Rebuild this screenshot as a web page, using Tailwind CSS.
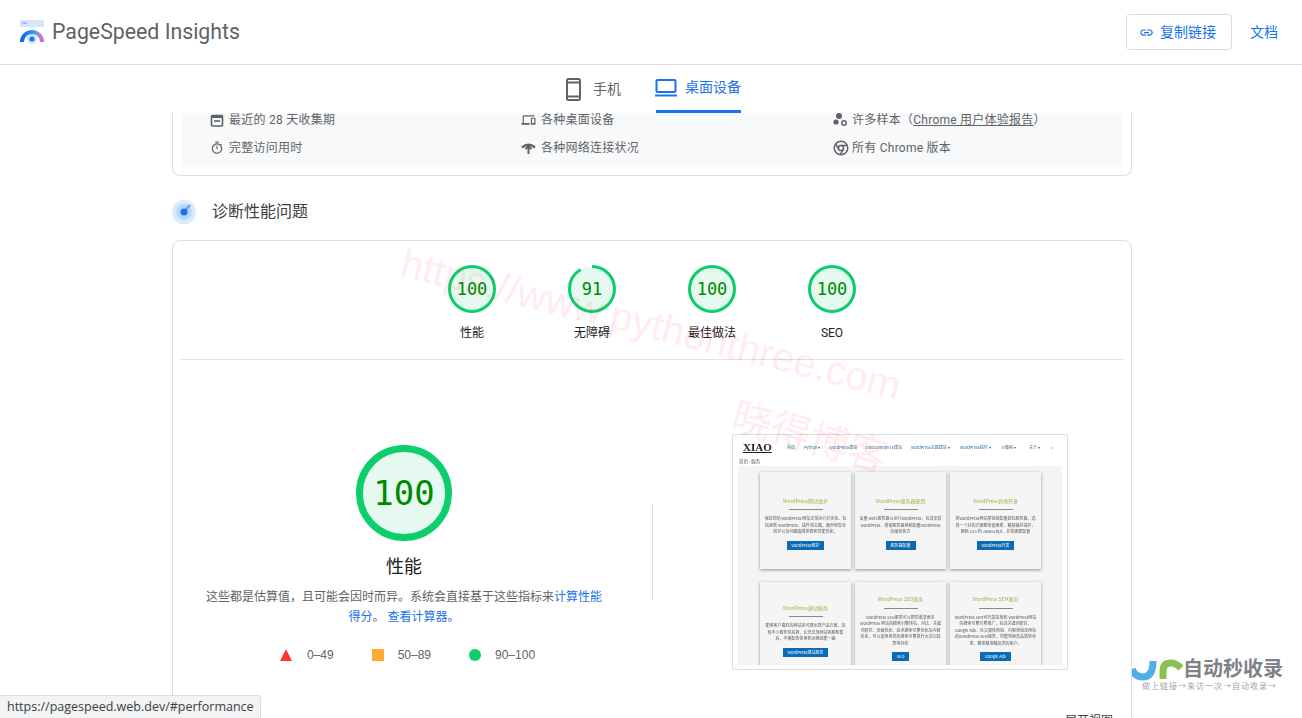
<!DOCTYPE html>
<html lang="zh-CN">
<head>
    <meta charset="UTF-8">
    <meta name="viewport" content="width=device-width, initial-scale=1.0">
    <title>PageSpeed Insights</title>
    <script src="https://cdn.jsdelivr.net/npm/@tailwindcss/browser@4"></script>
</head>
<body class="relative w-[1302px] h-[718px] overflow-hidden bg-white text-[#3c4043] font-['Roboto','Noto_Sans_CJK_SC',sans-serif]">
    <!-- 顶栏 -->
    <header class="h-[65px] border-b border-[#dadce0] flex items-center pl-[20px] pr-[24px]">
        <svg class="w-[25px] h-[25px]" viewBox="0 0 25 25">
            <defs>
                <linearGradient id="arc" x1="0" y1="0" x2="1" y2="0">
                    <stop offset="0" stop-color="#1a5ff0" />
                    <stop offset="0.55" stop-color="#2a9cf0" />
                    <stop offset="0.8" stop-color="#a08ae8" />
                    <stop offset="1" stop-color="#d06ad0" />
                </linearGradient>
            </defs>
            <rect x="0" y="0" width="24" height="7" fill="#d5e6fb" />
            <rect x="2" y="2" width="5" height="2" fill="#9cc4f7" />
            <path d="M2 22 A10 10 0 0 1 22 22" fill="none" stroke="url(#arc)" stroke-width="4" />
            <circle cx="12" cy="19" r="5" fill="#8ec5fb" opacity="0.45" />
            <circle cx="12" cy="19" r="2.5" fill="#1a73e8" />
        </svg>
        <span class="ml-[7px] -mt-[1px] text-[21.3px] text-[#5f6368]">PageSpeed Insights</span>
        <div class="ml-auto flex items-center">
            <button class="w-[106px] h-[36px] border border-[#dadce0] rounded-[4px] flex items-center justify-center gap-[6px] text-[14px] text-[#1a73e8]">
                <svg class="w-[15px] h-[15px] -ml-[3px]" viewBox="0 0 24 24" fill="#1a73e8">
                    <path d="M3.9 12c0-1.71 1.39-3.1 3.1-3.1h4V7H7c-2.76 0-5 2.24-5 5s2.24 5 5 5h4v-1.9H7c-1.71 0-3.1-1.39-3.1-3.1zM8 13h8v-2H8v2zm9-6h-4v1.9h4c1.71 0 3.1 1.39 3.1 3.1s-1.39 3.1-3.1 3.1h-4V17h4c2.76 0 5-2.24 5-5s-2.24-5-5-5z" />
                </svg>
                复制链接
            </button>
            <a class="ml-[18px] text-[14px] text-[#1a73e8]">文档</a>
        </div>
    </header>

    <!-- 设备切换 -->
    <nav class="h-[48px] flex pl-[565px] text-[14px]">
        <div class="w-[91px] flex items-center gap-[11px] text-[#5f6368]">
            <svg class="w-[17px] h-[23px]" viewBox="0 0 17 23" fill="none" stroke="#5f6368" stroke-width="2">
                <rect x="2" y="1" width="13" height="21" rx="1.5" />
                <path d="M2 4.5h13M2 18.5h13" />
            </svg>
            手机
        </div>
        <div class="w-[85px] h-[48px] border-b-[3px] border-[#1a73e8] flex items-center gap-[8px] text-[#1a73e8]">
            <svg class="w-[22px] h-[18px] -ml-[1px]" viewBox="0 0 22 18" fill="none" stroke="#1a73e8" stroke-width="2">
                <rect x="1.5" y="1" width="19" height="12" rx="1" />
                <path d="M0 16.5h22" />
            </svg>
            <span class="whitespace-nowrap">桌面设备</span>
        </div>
    </nav>

    <!-- 滚动区 -->
    <main class="h-[605px] overflow-hidden">
        <div class="w-[960px] ml-[172px]">
            <div class="-mt-[7px] border border-t-0 border-[#dadce0] rounded-b-[8px] px-[8px] pb-[8px]">
                <div class="bg-[#f8f9fa] pl-[29px] pb-[5px] grid grid-cols-[311px_312px_1fr] auto-rows-[28px] items-center text-[12px] tracking-[0.25px] text-[#5f6368]">
                    <div class="flex items-center gap-[5px]">
                        <svg class="w-[14px] h-[14px]" viewBox="0 0 14 14" fill="none" stroke="#5f6368" stroke-width="1.6">
                            <rect x="1.5" y="2.5" width="11" height="10.5" rx="1" />
                            <path d="M1.5 3.5h11" stroke-width="3" />
                            <path d="M4 8h6" />
                        </svg>
                        最近的 28 天收集期
                    </div>
                    <div class="flex items-center gap-[5px]">
                        <svg class="w-[15px] h-[14px]" viewBox="0 0 24 24" fill="#5f6368">
                            <path d="M4 6h18V4H4c-1.1 0-2 .9-2 2v11H0v3h14v-3H4V6zm19 2h-6c-.55 0-1 .45-1 1v10c0 .55.45 1 1 1h6c.55 0 1-.45 1-1V9c0-.55-.45-1-1-1zm-1 9h-4v-7h4v7z" />
                        </svg>
                        各种桌面设备
                    </div>
                    <div class="flex items-center gap-[4px]">
                        <svg class="w-[15px] h-[14px]" viewBox="0 0 15 14" fill="#5f6368">
                            <circle cx="6" cy="3" r="3" />
                            <circle cx="3" cy="9" r="2.6" />
                            <circle cx="11" cy="10" r="2.2" fill="none" stroke="#5f6368" stroke-width="1.6" />
                        </svg>
                        <span>许多样本（<span class="underline">Chrome 用户体验报告</span>）</span>
                    </div>
                    <div class="flex items-center gap-[5px]">
                        <svg class="w-[14px] h-[14px]" viewBox="0 0 24 24" fill="#5f6368">
                            <path d="M15 1H9v2h6V1zm-4 13h2V8h-2v6zm8.03-6.61l1.42-1.42c-.43-.51-.9-.99-1.41-1.41l-1.42 1.42C16.07 4.74 14.12 4 12 4c-4.97 0-9 4.03-9 9s4.02 9 9 9 9-4.03 9-9c0-2.12-.74-4.07-1.97-5.61zM12 20c-3.87 0-7-3.13-7-7s3.13-7 7-7 7 3.13 7 7-3.13 7-7 7z" />
                        </svg>
                        完整访问用时
                    </div>
                    <div class="flex items-center gap-[5px]">
                        <svg class="w-[15px] h-[11px]" viewBox="0 0 15 11" fill="none" stroke="#5f6368">
                            <path d="M1 4.5 Q7.5 -1 14 4.5" stroke-width="2.4" />
                            <path d="M4.5 6 L7.5 3 L10.5 6 M7.5 4 V11" stroke-width="2" />
                        </svg>
                        各种网络连接状况
                    </div>
                    <div class="flex items-center gap-[3px]">
                        <svg class="w-[16px] h-[16px]" viewBox="0 0 16 16" fill="none" stroke="#5f6368" stroke-width="1.5">
                            <circle cx="8" cy="8" r="6.8" />
                            <circle cx="8" cy="8" r="2.6" />
                            <path d="M8 5.4h6.2M5.7 9.3 2.6 4M10.3 9.3 7.2 14.7" />
                        </svg>
                        所有 Chrome 版本
                    </div>
                </div>
            </div>

            <!-- 诊断性能问题 -->
            <div class="h-[64px] pt-[8px] flex items-center">
                <svg class="w-[24px] h-[24px]" viewBox="0 0 24 24">
                    <circle cx="12" cy="12" r="12" fill="#d8eafc" />
                    <circle cx="12" cy="12" r="8" fill="#b8d8fa" />
                    <path d="M12 12 L18 5" stroke="#5f9df0" stroke-width="2" />
                    <circle cx="12" cy="12" r="3.6" fill="#1a73e8" />
                </svg>
                <h2 class="ml-[16px] text-[16px] text-[#3c4043]">诊断性能问题</h2>
            </div>

            <section class="border border-[#dadce0] rounded-t-[8px]">
                <!-- 四个小分数 -->
                <div class="pt-[24px] pb-[16px] flex justify-center">
                    <div class="w-[120px] flex flex-col items-center">
                        <div class="relative w-[48px] h-[48px] flex items-center justify-center font-['DejaVu_Sans_Mono',monospace] text-[17px] text-[#008800]">
                            <svg class="absolute inset-0" viewBox="0 0 48 48"><circle cx="24" cy="24" r="22.5" fill="#e6f9f0" stroke="#0cce6b" stroke-width="3" /></svg>
                            <span class="relative pt-[1px]">100</span>
                        </div>
                        <span class="mt-[10px] text-[12px] leading-[20px] text-[#212121]">性能</span>
                    </div>
                    <div class="w-[120px] flex flex-col items-center">
                        <div class="relative w-[48px] h-[48px] flex items-center justify-center font-['DejaVu_Sans_Mono',monospace] text-[17px] text-[#008800]">
                            <svg class="absolute inset-0 -rotate-90" viewBox="0 0 48 48"><circle cx="24" cy="24" r="22.5" fill="#e6f9f0" stroke="#0cce6b" stroke-width="3" stroke-dasharray="128.6 141.4" /></svg>
                            <span class="relative pt-[1px]">91</span>
                        </div>
                        <span class="mt-[10px] text-[12px] leading-[20px] text-[#212121]">无障碍</span>
                    </div>
                    <div class="w-[120px] flex flex-col items-center">
                        <div class="relative w-[48px] h-[48px] flex items-center justify-center font-['DejaVu_Sans_Mono',monospace] text-[17px] text-[#008800]">
                            <svg class="absolute inset-0" viewBox="0 0 48 48"><circle cx="24" cy="24" r="22.5" fill="#e6f9f0" stroke="#0cce6b" stroke-width="3" /></svg>
                            <span class="relative pt-[1px]">100</span>
                        </div>
                        <span class="mt-[10px] text-[12px] leading-[20px] text-[#212121]">最佳做法</span>
                    </div>
                    <div class="w-[120px] flex flex-col items-center">
                        <div class="relative w-[48px] h-[48px] flex items-center justify-center font-['DejaVu_Sans_Mono',monospace] text-[17px] text-[#008800]">
                            <svg class="absolute inset-0" viewBox="0 0 48 48"><circle cx="24" cy="24" r="22.5" fill="#e6f9f0" stroke="#0cce6b" stroke-width="3" /></svg>
                            <span class="relative pt-[1px]">100</span>
                        </div>
                        <span class="mt-[10px] text-[12px] leading-[20px] text-[#212121]">SEO</span>
                    </div>
                </div>
                <div class="mx-[8px] border-t border-[#e0e0e0]"></div>

                <div class="flex items-start">
                    <!-- 左：总分 -->
                    <div class="ml-[8px] w-[446px] pt-[85px] flex flex-col items-center">
                        <div class="relative w-[96px] h-[96px] flex items-center justify-center font-['DejaVu_Sans_Mono',monospace] text-[34px] text-[#008800]">
                            <svg class="absolute inset-0" viewBox="0 0 96 96"><circle cx="48" cy="48" r="44.5" fill="#e6f9f0" stroke="#0cce6b" stroke-width="7" /></svg>
                            <span class="relative">100</span>
                        </div>
                        <h3 class="mt-[13px] text-[18px] leading-[26px] text-[#212121]">性能</h3>
                        <p class="mt-[7px] w-[400px] text-center text-[12px] leading-[20px] text-[#5f6368]">
                            这些都是估算值，且可能会因时而异。系统会直接基于这些指标来<a class="text-[#1a73e8]">计算性能得分</a>。 <a class="text-[#1a73e8]">查看计算器。</a>
                        </p>
                        <div class="mt-[18px] ml-[7px] flex items-center font-['Liberation_Sans',sans-serif] text-[12px] leading-[20px] text-[#5f6368]">
                            <svg class="w-[12px] h-[12px]" viewBox="0 0 12 12"><path d="M6 0 12 12H0z" fill="#f33" /></svg>
                            <span class="ml-[15px]">0–49</span>
                            <span class="ml-[38px] w-[12px] h-[12px] bg-[#ffaa33]"></span>
                            <span class="ml-[14px]">50–89</span>
                            <span class="ml-[38px] w-[12px] h-[12px] rounded-full bg-[#0cce6b]"></span>
                            <span class="ml-[14px]">90–100</span>
                        </div>
                    </div>

                    <div class="ml-[25px] mt-[144px] w-px h-[96px] bg-[#dadce0]"></div>

                    <!-- 右：页面截图 -->
                    <div class="ml-[79px] mt-[74px] w-[336px] h-[236px] border border-[#dadce0] rounded-[2px] bg-white px-[5px] pt-[3px] overflow-hidden blur-[0.6px]">
                        <div class="h-[18px] flex items-center whitespace-nowrap text-[4px] text-[#2c6e9b] font-['Noto_Sans_CJK_SC',sans-serif]">
                            <span class="ml-[5px] w-[40px] font-['Liberation_Serif',serif] font-bold text-[11px] leading-[11px] text-[#222] underline">XIAO</span>
                            <span class="ml-[4px]">首页</span>
                            <span class="ml-[9px]">Python ▾</span>
                            <span class="ml-[9px]">WordPress建站</span>
                            <span class="ml-[8px]">WooCommerce建站</span>
                            <span class="ml-[9px]">WordPress主题建站 ▾</span>
                            <span class="ml-[10px]">WordPress插件 ▾</span>
                            <span class="ml-[11px]">IT教程 ▾</span>
                            <span class="ml-[13px]">关于 ▾</span>
                            <span class="ml-[11px]">⌕</span>
                        </div>
                        <div class="h-[10px] ml-[1px] text-[4.5px] leading-[10px] text-[#555] font-['Noto_Sans_CJK_SC',sans-serif]">首页 › 服务</div>
                        <div class="h-[199px] bg-[#f4f4f4] overflow-hidden pl-[22px] pt-[6px] grid grid-cols-[91px_91px_91px] auto-rows-[97px] gap-x-[4px] gap-y-[13px] text-[4px] leading-[6.5px] text-[#555] font-['Noto_Sans_CJK_SC',sans-serif]">
                            <div class="bg-[#f5f5f5] shadow-[0_1px_3px_#0006] flex flex-col items-center justify-center px-[4px] pt-[6px] text-center">
                                <span class="text-[5px] text-[#a3b14b]">WordPress网站维护</span>
                                <span class="my-[5px] w-[34px] border-t border-[#888]"></span>
                                <span>保持您的 WordPress 网站正常运行并优化。包括更新 WordPress、插件和主题，备份和安全防护以及问题故障排查和性能优化。</span>
                                <span class="mt-[6px] px-[5px] h-[9px] leading-[9px] bg-[#0b6bb5] text-white">WordPress维护</span>
                            </div>
                            <div class="bg-[#f5f5f5] shadow-[0_1px_3px_#0006] flex flex-col items-center justify-center px-[4px] pt-[6px] text-center">
                                <span class="text-[5px] text-[#a3b14b]">WordPress服务器配置</span>
                                <span class="my-[5px] w-[34px] border-t border-[#888]"></span>
                                <span>设置 Web 服务器以运行WordPress，包括安装 WordPress、所需服务器系统配置WordPress的最佳化方</span>
                                <span class="mt-[6px] px-[5px] h-[9px] leading-[9px] bg-[#0b6bb5] text-white">服务器配置</span>
                            </div>
                            <div class="bg-[#f5f5f5] shadow-[0_1px_3px_#0006] flex flex-col items-center justify-center px-[4px] pt-[6px] text-center">
                                <span class="text-[5px] text-[#a3b14b]">WordPress其他开发</span>
                                <span class="my-[5px] w-[34px] border-t border-[#888]"></span>
                                <span>将WordPress网站所链接配置到位服务器，选择一个好的方案整体使更新，精简储存插件，删除 CSS 和 JavaScript，并按需要配置</span>
                                <span class="mt-[6px] px-[5px] h-[9px] leading-[9px] bg-[#0b6bb5] text-white">WordPress开发</span>
                            </div>
                            <div class="bg-[#f5f5f5] shadow-[0_1px_3px_#0006] flex flex-col items-center justify-center px-[4px] text-center">
                                <span class="text-[5px] text-[#a3b14b]">WordPress建站服务</span>
                                <span class="my-[5px] w-[34px] border-t border-[#888]"></span>
                                <span>能够客户喜欢的网站还可展示您产品方案，这有不少服务供应商，让您无须网站客服和售后，不需配合体系和运维就能一路</span>
                                <span class="mt-[6px] px-[5px] h-[9px] leading-[9px] bg-[#0b6bb5] text-white">WordPress建站服务</span>
                            </div>
                            <div class="bg-[#f5f5f5] shadow-[0_1px_3px_#0006] flex flex-col items-center px-[4px] pt-[14px] text-center">
                                <span class="text-[5px] text-[#a3b14b]">WordPress SEO服务</span>
                                <span class="my-[5px] w-[34px] border-t border-[#888]"></span>
                                <span>WordPress SEO服务可以帮您收录更多 WordPress 网站的搜索引擎排名。对比、关键词研究、页面优化、技术搜索引擎优化及内容优化，可以使用用您的搜索引擎提升大流行趋势等分析</span>
                                <span class="mt-[6px] px-[5px] h-[9px] leading-[9px] bg-[#0b6bb5] text-white">SEO</span>
                            </div>
                            <div class="bg-[#f5f5f5] shadow-[0_1px_3px_#0006] flex flex-col items-center px-[4px] pt-[14px] text-center">
                                <span class="text-[5px] text-[#a3b14b]">WordPress SEM服务</span>
                                <span class="my-[5px] w-[34px] border-t border-[#888]"></span>
                                <span>WordPress SEM可开发投放和 WordPress网站的搜索引擎付费推广，包括关键词研究、Google Ads、社交媒体营销、内容营销及网站的WordPress SEM服务，您能将更高品质转化率，整体精准触及您的客户。</span>
                                <span class="mt-[6px] px-[5px] h-[9px] leading-[9px] bg-[#0b6bb5] text-white">Google Ads</span>
                            </div>
                        </div>
                    </div>
                </div>
                <div class="mt-[43px] pr-[18px] text-right text-[12px] leading-[16px] text-[#3c4043]">展开视图</div>
            </section>
        </div>
    </main>

    <!-- 水印 -->
    <span class="absolute left-[402px] top-[240px] origin-left rotate-[14deg] whitespace-nowrap pointer-events-none font-['Liberation_Sans',sans-serif] text-[40px] leading-[44px] text-[#f5003c]/[0.08]">https://www.pythonthree.com</span>
    <span class="absolute left-[733px] top-[394px] origin-left rotate-[16deg] whitespace-nowrap pointer-events-none text-[40px] leading-[44px] text-[#f5003c]/[0.08]">晓得博客</span>

    <!-- 角标 -->
    <div class="absolute left-[1132px] top-[657px] w-[160px] pointer-events-none">
        <div class="flex items-center h-[24px]">
            <svg class="w-[51px] h-[24px]" viewBox="0 0 51 24" fill="none" stroke-width="7">
                <path d="M0 12 Q3 20 11 20 Q21 20 21 4" stroke="#4eb0e6" />
                <path d="M31 22 V14 Q31 6 39 6 Q44 6 49 11" stroke="#8cc152" />
            </svg>
            <span class="text-[20px] leading-[24px] font-bold text-[#7c8287]">自动秒收录</span>
        </div>
        <div class="ml-[10px] mt-[1px] whitespace-nowrap text-[8px] leading-[10px] tracking-[1px] text-[#a2a6aa]">做上链接→来访一次→自动收录→</div>
    </div>

    <!-- 状态气泡 -->
    <div class="absolute left-0 bottom-0 w-[261px] h-[23px] pl-[7px] bg-[#f1f3f4] border-t border-r border-[#dcdcdc] rounded-tr-[3px] font-['Open_Sans',sans-serif] text-[12.5px] leading-[22px] text-[#3c4043] whitespace-nowrap">https://pagespeed.web.dev/#performance</div>
</body>
</html>
